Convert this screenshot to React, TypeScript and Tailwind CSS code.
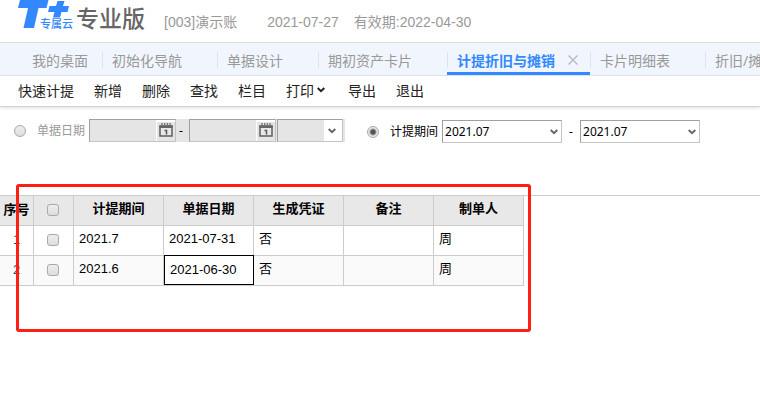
import { useState } from "react";
import type { ReactNode } from "react";

type Voucher = { period: string; date: string; generated: string; remark: string; maker: string };

const TABS = ["我的桌面", "初始化导航", "单据设计", "期初资产卡片", "计提折旧与摊销", "卡片明细表", "折旧/摊"];
const ACTIONS = ["快速计提", "新增", "删除", "查找", "栏目", "打印", "导出", "退出"];
const COLUMNS = ["计提期间", "单据日期", "生成凭证", "备注", "制单人"];
const ROWS: Voucher[] = [
  { period: "2021.7", date: "2021-07-31", generated: "否", remark: "", maker: "周" },
  { period: "2021.6", date: "2021-06-30", generated: "否", remark: "", maker: "周" },
];

function Chevron({ className }: { className: string }) {
  return (
    <svg viewBox="0 0 8 6" className={className} fill="none" stroke="currentColor" strokeWidth="2">
      <path d="M0.7 1 L4 4.2 L7.3 1" />
    </svg>
  );
}

function Logo() {
  return (
    <div className="relative h-[30px] w-[58px] shrink-0 text-[#3388ff]">
      <svg viewBox="0 0 58 30" className="h-full w-full" fill="currentColor">
        <path d="M2 0 H30.500 L28.500 8 H20.500 L16 28 H5.500 L10 8 H0 Z" />
        <path d="M39.500 1 H46.500 L45 6 H51 L49.500 12 H43.500 L42 17.500 H35 L36.500 12 H30 L31.500 6 H38 Z" />
      </svg>
      <span className="absolute top-[18px] left-[22px] text-[11px] leading-[13px] font-medium whitespace-nowrap">专属云</span>
    </div>
  );
}

function DateBox({ label }: { label: string }) {
  return (
    <div className="flex h-[23px] w-[87px] border border-[#c4c4c4] border-t-[#a0a0a0] border-l-[#a0a0a0]">
      <input aria-label={label} disabled className="min-w-0 flex-1 bg-[#e5e5e5]" />
      <button disabled aria-label="选择日期" className="flex w-[19px] items-start justify-center border-t-2 border-l border-white bg-[#e5e5e5] pt-px">
        <svg viewBox="0 0 14 14" className="h-[14px] w-[14px]">
          <rect x="1" y="3" width="12" height="10" fill="#e8e8e8" stroke="#666" strokeWidth="1.600" />
          <path d="M0.500 2.500 H13.500 V5 H0.500 Z" fill="#666" />
          <path d="M3 0 V3 M5.700 0 V3 M8.400 0 V3 M11 0 V3" stroke="#777" strokeWidth="1.400" />
          <path d="M5.500 7.500 H7.500 V11.500" fill="none" stroke="#555" strokeWidth="1.500" />
        </svg>
      </button>
    </div>
  );
}

function PeriodSelect({ label }: { label: string }) {
  return (
    <div className="relative w-[120px]">
      <select
        aria-label={label}
        className="h-[23px] w-full appearance-none border border-[#c4c4c4] border-t-[#a0a0a0] border-l-[#a0a0a0] bg-white pl-[2px] text-xs text-black"
      >
        <option>2021.07</option>
        <option>2021.06</option>
      </select>
      <Chevron className="pointer-events-none absolute top-[9px] right-1 h-[6px] w-[8px] text-[#666]" />
    </div>
  );
}

function ModeRadio({ checked, onChange, children }: { checked: boolean; onChange: () => void; children: ReactNode }) {
  return (
    <label className={checked ? "flex items-center gap-[11px] text-black" : "flex items-center gap-[11px] text-[#999]"}>
      <input
        type="radio"
        name="mode"
        checked={checked}
        onChange={onChange}
        className="h-3 w-3 appearance-none rounded-full border border-[#a8a8a8] bg-linear-to-b from-[#eee] to-[#ddd] checked:bg-[radial-gradient(circle,#555_0_2px,#e8e8e8_4px)]"
      />
      {children}
    </label>
  );
}

function Tick({ label }: { label: string }) {
  return (
    <input
      type="checkbox"
      aria-label={label}
      className="ml-[13px] block h-3 w-3 appearance-none rounded-[3px] border border-[#aaa] bg-linear-to-b from-[#eee] to-[#ddd] checked:bg-[#3388ff]"
    />
  );
}

export default function App() {
  const [active, setActive] = useState(4);
  const [mode, setMode] = useState("period");
  const cell = "border border-[#ccc] px-[5px] pt-0 pb-[2px]";

  return (
    <div className="min-h-screen overflow-hidden bg-white font-['Noto_Sans','Noto_Sans_CJK_SC',sans-serif] text-sm text-[#222]">
      {/* Header */}
      <header className="flex h-[43px] items-start border-b border-[#ddd] pl-[18px] font-['Liberation_Sans','Noto_Sans_CJK_SC',sans-serif] whitespace-nowrap text-[#999]">
        <Logo />
        <h1 className="pt-[7px] text-[23px] leading-6 font-medium text-[#666]">专业版</h1>
        <span className="ml-[19px] pt-3 leading-5">[003]演示账</span>
        <span className="ml-[30px] pt-3 leading-5">2021-07-27</span>
        <span className="ml-[15px] pt-3 leading-5">有效期:2022-04-30</span>
      </header>

      {/* Tabs */}
      <nav className="flex h-[33px] overflow-hidden border-b border-[#dfe5ee] bg-[#f1f6fe] pl-[21px] whitespace-nowrap">
        {TABS.map((tab, i) => (
          <div
            key={tab}
            className={
              i === active
                ? "relative flex shrink-0 items-center border-b-3 border-[#3388ff] pt-[5px] font-bold text-[#3388ff]"
                : "relative flex shrink-0 items-center pt-[2px] text-[#999]"
            }
          >
            {i > 0 && <span className="h-4 w-px bg-[#dde3ec]" />}
            <button onClick={() => setActive(i)} className={i === 0 ? "pt-px pr-[14px] pl-[11px]" : "pt-px pr-[35px] pl-[9px]"}>
              {tab}
            </button>
            {i === active && (
              <button aria-label="关闭" className="absolute right-[12px] text-[#bbb]">
                <svg viewBox="0 0 10 10" className="h-[10px] w-[10px]" stroke="currentColor" strokeWidth="1.500">
                  <path d="M0.500 0.500 L9.500 9.500 M9.500 0.500 L0.500 9.500" />
                </svg>
              </button>
            )}
          </div>
        ))}
      </nav>

      {/* Toolbar */}
      <div className="flex h-[31px] items-center gap-5 border-b border-[#d4d4d4] pl-[18px] whitespace-nowrap shadow-[0_1px_3px_#ddd]">
        {ACTIONS.map((name) => (
          <button key={name} className="flex items-center">
            {name}
            {name === "打印" && <Chevron className="mr-[3px] mb-[2px] ml-[3px] h-[6px] w-[8px]" />}
          </button>
        ))}
      </div>

      {/* Filters */}
      <form className="flex h-[88px] items-start pt-3 pl-[14px] text-xs whitespace-nowrap">
        <div className="flex h-[23px] items-center">
          <ModeRadio checked={mode === "date"} onChange={() => setMode("date")}>单据日期</ModeRadio>
        </div>
        <div className="ml-1 flex h-[23px] items-center bg-[#e5e5e5] text-black">
          <DateBox label="开始日期" />
          <span className="w-[13px] pl-[3px]">-</span>
          <DateBox label="结束日期" />
          <div className="relative ml-[1px] w-[66px]">
            <select
              aria-label="日期范围"
              disabled
              className="block h-[23px] w-full appearance-none border border-[#c4c4c4] border-t-[#a0a0a0] border-l-[#a0a0a0] bg-[#e5e5e5]"
            />
            <span className="pointer-events-none absolute top-px right-px flex h-[21px] w-[18px] items-center justify-center bg-white pr-[2px] text-[#666]">
              <Chevron className="h-[6px] w-[8px]" />
            </span>
          </div>
          <span className="w-[2px]" />
        </div>
        <div className="ml-[22px] flex h-[25px] items-center">
          <ModeRadio checked={mode === "period"} onChange={() => setMode("period")}>计提期间</ModeRadio>
          <span className="w-1" />
          <PeriodSelect label="开始期间" />
          <span className="w-[18px] pl-[7px] text-black">-</span>
          <PeriodSelect label="结束期间" />
        </div>
      </form>

      {/* Vouchers */}
      <section className="relative border-t border-[#ccc]">
        <table className="-ml-px w-[525px] table-fixed border-collapse font-['Liberation_Sans','Noto_Sans_CJK_SC',sans-serif] text-[13px] leading-5 text-black">
          <colgroup>
            <col className="w-[34px]" />
            <col className="w-10" />
            {COLUMNS.map((name) => <col key={name} className="w-[90px]" />)}
          </colgroup>
          <thead>
            <tr className="h-[29px] bg-[#e8e8e8]">
              <th className="border border-t-0 border-[#ccc] p-0">序号</th>
              <th className="border border-t-0 border-[#ccc] p-0"><Tick label="全选" /></th>
              {COLUMNS.map((name) => (
                <th key={name} className="border border-t-0 border-[#ccc] p-0 pb-[2px]">{name}</th>
              ))}
            </tr>
          </thead>
          <tbody>
            {ROWS.map((row, i) => (
              <tr key={row.date} className="h-[30px] even:bg-[#fafafa]">
                <td className="border border-[#ccc] p-0 text-center text-[#444]">{i + 1}</td>
                <td className="border border-[#ccc] p-0"><Tick label={row.period} /></td>
                <td className={cell}>{row.period}</td>
                <td className={i === 1 ? "border border-[#ccc] bg-white px-[6px] outline -outline-offset-1 outline-black" : cell}>{row.date}</td>
                <td className={cell}>{row.generated}</td>
                <td className={cell}>{row.remark}</td>
                <td className={cell}>{row.maker}</td>
              </tr>
            ))}
          </tbody>
        </table>
        {/* Highlight frame over the grid */}
        <div className="pointer-events-none absolute -top-3 left-4 h-[148px] w-[515px] rounded-[3px] border-3 border-[#ff1e12]" />
      </section>
    </div>
  );
}
